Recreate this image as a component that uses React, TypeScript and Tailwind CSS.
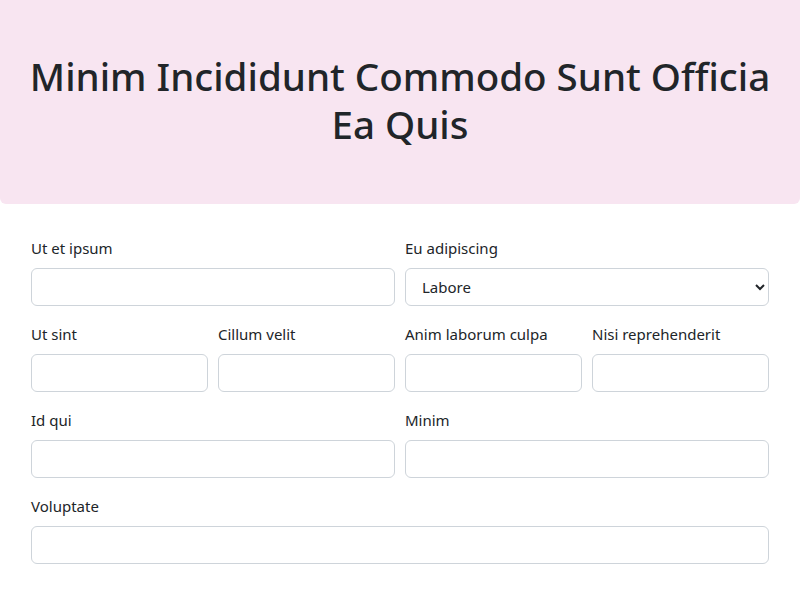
import React from 'react';

// Simple form field: label above a text input or select
const Field = ({ label, children }: { label: string; children: React.ReactNode }) => (
  <div className="flex flex-col">
    <label className="mb-2 text-[15px] leading-6 text-[#212529]">{label}</label>
    {children}
  </div>
);

const inputCls =
  'h-[38px] w-full rounded-[6px] border border-[#ced4da] bg-white px-3 text-[15px] text-[#212529] outline-none';

const App = () => {
  return (
    <div className="min-h-[600px] bg-white font-['Noto_Sans',sans-serif] text-[#212529]">
      {/* Header banner */}
      <div className="flex h-[204px] items-center justify-center rounded-b-[6px] bg-[#f8e5f1] px-4 pb-[4px]">
        <h1 className="text-center text-[38.5px] font-medium leading-[48px] text-[#212529]">
          Minim Incididunt Commodo Sunt Officia Ea Quis
        </h1>
      </div>

      {/* Form */}
      <form className="flex flex-col gap-4 px-[31px] pt-8">
        <div className="grid grid-cols-2 gap-x-[10px]">
          <Field label="Ut et ipsum">
            <input className={inputCls} />
          </Field>
          <Field label="Eu adipiscing">
            <select className={inputCls + ' text-[#3a3f44]'} defaultValue="Labore">
              <option>Labore</option>
            </select>
          </Field>
        </div>

        <div className="grid grid-cols-4 gap-x-[10px]">
          <Field label="Ut sint">
            <input className={inputCls} />
          </Field>
          <Field label="Cillum velit">
            <input className={inputCls} />
          </Field>
          <Field label="Anim laborum culpa">
            <input className={inputCls} />
          </Field>
          <Field label="Nisi reprehenderit">
            <input className={inputCls} />
          </Field>
        </div>

        <div className="grid grid-cols-2 gap-x-[10px]">
          <Field label="Id qui">
            <input className={inputCls} />
          </Field>
          <Field label="Minim">
            <input className={inputCls} />
          </Field>
        </div>

        <Field label="Voluptate">
          <input className={inputCls} />
        </Field>
      </form>
    </div>
  );
};

export default App;
